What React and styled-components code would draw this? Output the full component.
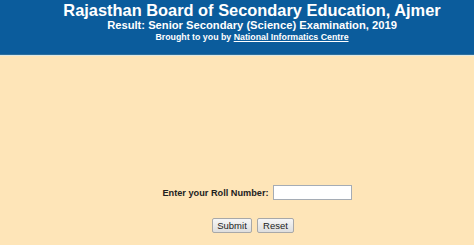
import React from 'react';
import styled, { createGlobalStyle } from 'styled-components';

const GlobalStyle = createGlobalStyle`
  html, body {
    margin: 0;
    padding: 0;
    background: #fee5b8;
    font-family: "Liberation Sans", Arial, sans-serif;
  }
`;

const Page = styled.div`
  width: 474px;
  height: 245px;
  display: flex;
  flex-direction: column;
  background: #fee5b8;
  overflow: hidden;
`;

const Header = styled.header`
  background: #0b5c9c;
  color: #fff;
  text-align: center;
  height: 55px;
  box-sizing: border-box;
  padding-left: 30px;
  display: flex;
  flex-direction: column;
  align-items: center;
  border-bottom: 1px solid #2e6f9c;
  box-shadow: 0 1px 0 #dfe8e4;
`;

const Title = styled.h1`
  margin: 1px 0 0;
  font-size: 16.4px;
  line-height: 18px;
  font-weight: bold;
  white-space: nowrap;
`;

const Subtitle = styled.div`
  font-size: ${(p) => p.size}px;
  line-height: ${(p) => p.lh}px;
  font-weight: bold;
  white-space: nowrap;
`;

const Link = styled.a`
  color: #fff;
  text-decoration: underline;
`;

const Form = styled.form`
  flex: 1;
  display: flex;
  flex-direction: column;
  align-items: center;
  justify-content: flex-end;
  padding-bottom: 12px;
  gap: 18px;
`;

const Row = styled.div`
  display: flex;
  align-items: center;
  gap: 4px;
  padding-left: 40px;
`;

const Label = styled.label`
  font-size: 9.2px;
  font-weight: bold;
  color: #222;
`;

const Input = styled.input`
  box-sizing: border-box;
  width: 79px;
  height: 15px;
  border: 1px solid #a5acb5;
  background: #fff;
  padding: 0 2px;
  font-size: 9px;
`;

const Buttons = styled.div`
  display: flex;
  gap: 5px;
  padding-left: 32px;
`;

const Button = styled.button`
  box-sizing: border-box;
  width: ${(p) => p.w}px;
  height: 15px;
  padding: 0;
  font-family: "Liberation Sans", Arial, sans-serif;
  font-size: 9.5px;
  color: #222;
  background: linear-gradient(#f6f6f6, #dedede);
  border: 1px solid #a8a8a8;
  border-radius: 2px;
`;

export default function App() {
  return (
    <>
      <GlobalStyle />
      <Page>
        <Header>
          <Title>Rajasthan Board of Secondary Education, Ajmer</Title>
          <Subtitle size={11.2} lh={13}>Result: Senior Secondary (Science) Examination, 2019</Subtitle>
          <Subtitle size={8.8} lh={10}>
            Brought to you by <Link href="#">National Informatics Centre</Link>
          </Subtitle>
        </Header>
        <Form onSubmit={(e) => e.preventDefault()}>
          <Row>
            <Label htmlFor="roll">Enter your Roll Number:</Label>
            <Input id="roll" type="text" />
          </Row>
          <Buttons>
            <Button type="submit" w={40}>Submit</Button>
            <Button type="reset" w={37}>Reset</Button>
          </Buttons>
        </Form>
      </Page>
    </>
  );
}
